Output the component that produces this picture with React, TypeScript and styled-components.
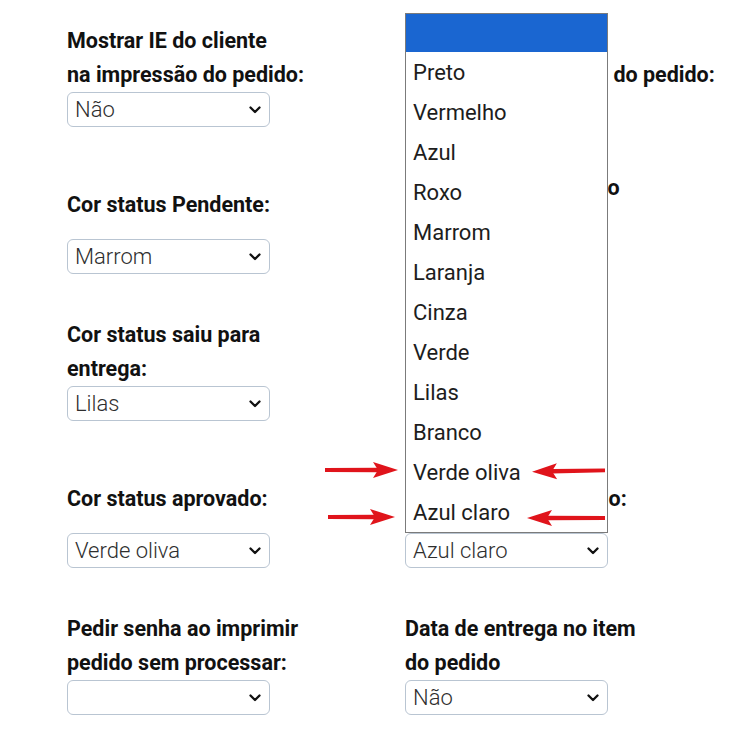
import styled, { createGlobalStyle } from 'styled-components';

const GlobalStyle = createGlobalStyle`
  html, body {
    margin: 0;
    padding: 0;
    background: #fff;
  }
  body {
    font-family: Roboto, "Liberation Sans", Arial, sans-serif;
    color: #111;
  }
`;

const Page = styled.div`
  position: relative;
  width: 731px;
  height: 743px;
  padding: 24px 0 0 67px;
  box-sizing: border-box;
  overflow: hidden;
`;

const Form = styled.div`
  display: grid;
  grid-template-columns: 338px 338px;
  row-gap: 44px;
`;

const Field = styled.div`
  display: flex;
  flex-direction: column;
`;

const Label = styled.div`
  min-height: 67px;
  display: flex;
  align-items: center;
  font-size: 21.5px;
  font-weight: 700;
  line-height: 33.5px;
  color: #111;
  white-space: nowrap;
  margin-bottom: 1px;
`;

const SelectWrap = styled.div`
  position: relative;
  width: 203px;
`;

const SelectBox = styled.div`
  height: 35px;
  box-sizing: border-box;
  border: 1px solid #b9c5d2;
  border-radius: 6px;
  padding: 0 8px 0 7px;
  display: flex;
  align-items: center;
  justify-content: space-between;
  font-size: 22px;
  font-weight: 300;
  color: #2e2e2e;
  background: #fff;
`;

const Popup = styled.div`
  position: absolute;
  left: 0;
  bottom: 100%;
  width: 203px;
  box-sizing: border-box;
  border: 1px solid #7b7b7b;
  background: #fff;
  z-index: 2;
`;

const Option = styled.div<{ $active?: boolean }>`
  height: ${(p) => (p.$active ? '38px' : '40px')};
  padding-left: 7px;
  display: flex;
  align-items: center;
  font-size: 22px;
  color: #1d1d1d;
  background: ${(p) => (p.$active ? '#1a66d1' : '#fff')};
`;

const ArrowSvg = styled.svg<{ $x: number; $y: number }>`
  position: absolute;
  left: ${(p) => p.$x}px;
  top: ${(p) => p.$y}px;
  overflow: visible;
  z-index: 3;
`;

const Chevron = () => (
  <svg width="12" height="8" viewBox="0 0 12 8">
    <path d="M1.5 1.5 L6 6 L10.5 1.5" fill="none" stroke="#111" strokeWidth="2.3" strokeLinecap="round" strokeLinejoin="round" />
  </svg>
);

type ArrowProps = { x: number; y: number; length: number; left?: boolean; tilt?: number };

// red annotation arrows drawn over the screenshot
const Arrow = ({ x, y, length, left, tilt = 0 }: ArrowProps) => {
  const L = length;
  const shaft = `M0 ${9 - 1.9} L${L - 20} ${9 - 2.3} L${L - 20} ${9 + 2.3} L0 ${9 + 1.9} Z`;
  const head = `M${L - 25} 1 L${L} 9 L${L - 25} 17 L${L - 20} 9 Z`;
  return (
    <ArrowSvg $x={x} $y={y - 9} width={L} height={18} viewBox={`0 0 ${L} 18`}>
      <g transform={`${left ? `translate(${L} 0) scale(-1 1)` : ''} rotate(${tilt} ${L / 2} 9)`}>
        <path d={shaft} fill="#e0141b" />
        <path d={head} fill="#e0141b" />
      </g>
    </ArrowSvg>
  );
};

const colors = [
  'Preto',
  'Vermelho',
  'Azul',
  'Roxo',
  'Marrom',
  'Laranja',
  'Cinza',
  'Verde',
  'Lilas',
  'Branco',
  'Verde oliva',
  'Azul claro',
];

type FieldDef = { label: React.ReactNode; value: string; open?: boolean };

const fields: FieldDef[] = [
  { label: <>Mostrar IE do cliente<br />na impressão do pedido:</>, value: 'Não' },
  { label: <>Mostrar observação<br />na impressão da rota do pedido:</>, value: '' },
  { label: 'Cor status Pendente:', value: 'Marrom' },
  { label: <>Cor status em trânsito<br />do pedido:</>, value: '' },
  { label: <>Cor status saiu para<br />entrega:</>, value: 'Lilas' },
  { label: <>Cor status em<br />produção:</>, value: '' },
  { label: 'Cor status aprovado:', value: 'Verde oliva' },
  { label: 'Cor status confirmado:', value: 'Azul claro', open: true },
  { label: <>Pedir senha ao imprimir<br />pedido sem processar:</>, value: '' },
  { label: <>Data de entrega no item<br />do pedido</>, value: 'Não' },
];

const App = () => {
  return (
    <>
      <GlobalStyle />
      <Page>
        <Form>
          {fields.map((f, i) => (
            <Field key={i}>
              <Label>
                <span>{f.label}</span>
              </Label>
              <SelectWrap>
                {f.open && (
                  <Popup>
                    <Option $active />
                    {colors.map((c) => (
                      <Option key={c}>{c}</Option>
                    ))}
                  </Popup>
                )}
                <SelectBox>
                  <span>{f.value}</span>
                  <Chevron />
                </SelectBox>
              </SelectWrap>
            </Field>
          ))}
        </Form>
        <Arrow x={325} y={470} length={73} />
        <Arrow x={328} y={517} length={67} />
        <Arrow x={532} y={471} length={73} left tilt={1} />
        <Arrow x={527} y={518} length={78} left />
      </Page>
    </>
  );
};

export default App;
